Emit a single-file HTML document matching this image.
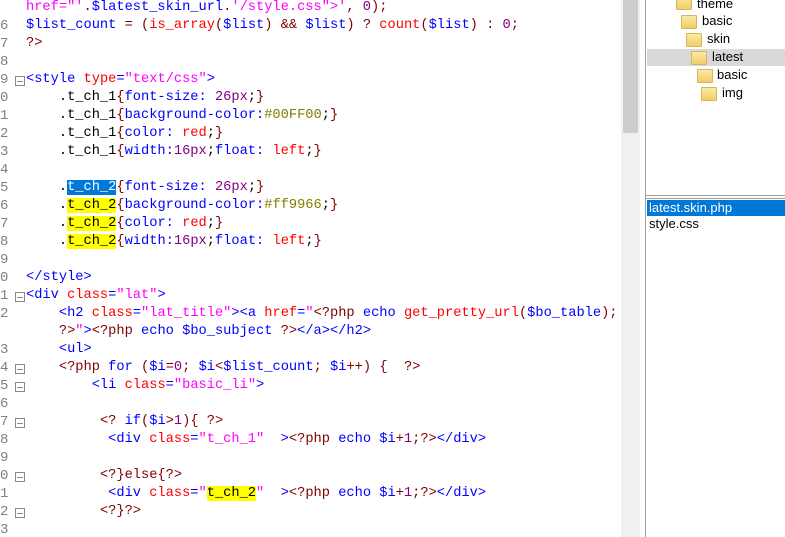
<!DOCTYPE html>
<html><head><meta charset="utf-8"><style>
html,body{margin:0;padding:0;width:785px;height:537px;overflow:hidden;background:#fff;position:relative}
#w{position:absolute;left:0;top:4px;width:620px;height:537px}
.ln{position:absolute;left:0;font:14px "Liberation Mono",monospace;color:#808080;line-height:18px}
.c{position:absolute;left:26px;font:13.7px "Liberation Mono",monospace;white-space:pre;line-height:18px;color:#000}
.f{position:absolute;left:15px;width:8px;height:8px;border:1px solid #888;}
.f:after{content:"";position:absolute;left:1px;right:1px;top:3.5px;height:1px;background:#888}
.t{color:#0000ff}.a{color:#ff0000}.s{color:#ff00ff}.o{color:#800000}.n{color:#800080}.h{color:#808000}
.y{background:#ffff00}.sel{background:#0078d7;color:#fff}
.tr{position:absolute;font:13px "Liberation Sans",sans-serif;color:#000;line-height:18px}
.fo{position:absolute;width:14px;height:12px;background:linear-gradient(#fbe9a6,#f2cd62);border:1px solid #d9b45a;border-radius:1px}
</style></head><body>
<div style="position:absolute;left:621px;top:0;width:19px;height:537px;background:#f0f0f0"></div>
<div style="position:absolute;left:623px;top:0;width:15px;height:133px;background:#cdcdcd"></div>
<div style="position:absolute;left:645px;top:0;width:1px;height:537px;background:#a0a0a0"></div>
<div style="position:absolute;left:645px;top:195px;width:140px;height:1px;background:#a0a0a0"></div>
<div style="position:absolute;left:645px;top:198px;width:140px;height:1px;background:#a0a0a0"></div>
<div style="position:absolute;left:647px;top:49px;width:138px;height:17px;background:#d9d9d9"></div>
<div class="fo" style="left:676px;top:-4px"></div><div class="tr" style="left:697px;top:-5px">theme</div>
<div class="fo" style="left:681px;top:15px"></div><div class="tr" style="left:702px;top:12px">basic</div>
<div class="fo" style="left:686px;top:33px"></div><div class="tr" style="left:707px;top:30px">skin</div>
<div class="fo" style="left:691px;top:51px"></div><div class="tr" style="left:712px;top:48px">latest</div>
<div class="fo" style="left:697px;top:69px"></div><div class="tr" style="left:717px;top:66px">basic</div>
<div class="fo" style="left:701px;top:87px"></div><div class="tr" style="left:722px;top:84px">img</div>
<div style="position:absolute;left:647px;top:200px;width:138px;height:16px;background:#0078d7"></div>
<div class="tr" style="left:649px;top:199px;color:#fff">latest.skin.php</div>
<div class="tr" style="left:649px;top:215px">style.css</div>

<div id="w">
<div class="c" style="top:-5px"><span class="s">href="'</span><span class="o">.</span><span class="t">$latest_skin_url</span><span class="o">.</span><span class="s">'/style.css"&gt;'</span><span class="o">,</span> <span class="n">0</span><span class="o">);</span></div>
<div class="ln" style="top:13px">6</div><div class="c" style="top:13px"><span class="t">$list_count</span> <span class="o">=</span> <span class="o">(</span><span class="a">is_array</span><span class="o">(</span><span class="t">$list</span><span class="o">)</span> <span class="o">&amp;&amp;</span> <span class="t">$list</span><span class="o">)</span> <span class="o">?</span> <span class="a">count</span><span class="o">(</span><span class="t">$list</span><span class="o">)</span> <span class="o">:</span> <span class="n">0</span><span class="o">;</span></div>
<div class="ln" style="top:31px">7</div><div class="c" style="top:31px"><span class="o">?&gt;</span></div>
<div class="ln" style="top:49px">8</div>
<div class="ln" style="top:67px">9</div><div class="f" style="top:72px"></div><div class="c" style="top:67px"><span class="t">&lt;style</span> <span class="a">type</span><span class="t">=</span><span class="s">"text/css"</span><span class="t">&gt;</span></div>
<div class="ln" style="top:85px">0</div><div class="c" style="top:85px">    .t_ch_1<span class="o">{</span><span class="t">font-size:</span> <span class="n">26px</span>;<span class="o">}</span></div>
<div class="ln" style="top:103px">1</div><div class="c" style="top:103px">    .t_ch_1<span class="o">{</span><span class="t">background-color:</span><span class="h">#00FF00</span>;<span class="o">}</span></div>
<div class="ln" style="top:121px">2</div><div class="c" style="top:121px">    .t_ch_1<span class="o">{</span><span class="t">color:</span> <span class="a">red</span>;<span class="o">}</span></div>
<div class="ln" style="top:139px">3</div><div class="c" style="top:139px">    .t_ch_1<span class="o">{</span><span class="t">width:</span><span class="n">16px</span>;<span class="t">float:</span> <span class="a">left</span>;<span class="o">}</span></div>
<div class="ln" style="top:157px">4</div>
<div class="ln" style="top:175px">5</div><div class="c" style="top:175px">    .<span class="sel">t_ch_2</span><span class="o">{</span><span class="t">font-size:</span> <span class="n">26px</span>;<span class="o">}</span></div>
<div class="ln" style="top:193px">6</div><div class="c" style="top:193px">    .<span class="y">t_ch_2</span><span class="o">{</span><span class="t">background-color:</span><span class="h">#ff9966</span>;<span class="o">}</span></div>
<div class="ln" style="top:211px">7</div><div class="c" style="top:211px">    .<span class="y">t_ch_2</span><span class="o">{</span><span class="t">color:</span> <span class="a">red</span>;<span class="o">}</span></div>
<div class="ln" style="top:229px">8</div><div class="c" style="top:229px">    .<span class="y">t_ch_2</span><span class="o">{</span><span class="t">width:</span><span class="n">16px</span>;<span class="t">float:</span> <span class="a">left</span>;<span class="o">}</span></div>
<div class="ln" style="top:247px">9</div>
<div class="ln" style="top:265px">0</div><div class="c" style="top:265px"><span class="t">&lt;/style&gt;</span></div>
<div class="ln" style="top:283px">1</div><div class="f" style="top:288px"></div><div class="c" style="top:283px"><span class="t">&lt;div</span> <span class="a">class</span><span class="t">=</span><span class="s">"lat"</span><span class="t">&gt;</span></div>
<div class="ln" style="top:301px">2</div><div class="c" style="top:301px">    <span class="t">&lt;h2</span> <span class="a">class</span><span class="t">=</span><span class="s">"lat_title"</span><span class="t">&gt;&lt;a</span> <span class="a">href</span><span class="t">=</span><span class="s">"</span><span class="o">&lt;?php</span> <span class="t">echo</span> <span class="a">get_pretty_url</span><span class="o">(</span><span class="t">$bo_table</span><span class="o">);</span></div>
<div class="c" style="top:319px">    <span class="o">?&gt;</span><span class="s">"</span><span class="t">&gt;</span><span class="o">&lt;?php</span> <span class="t">echo $bo_subject</span> <span class="o">?&gt;</span><span class="t">&lt;/a&gt;&lt;/h2&gt;</span></div>
<div class="ln" style="top:337px">3</div><div class="c" style="top:337px">    <span class="t">&lt;ul&gt;</span></div>
<div class="ln" style="top:355px">4</div><div class="f" style="top:360px"></div><div class="c" style="top:355px">    <span class="o">&lt;?php</span> <span class="t">for</span> <span class="o">(</span><span class="t">$i</span><span class="o">=</span><span class="n">0</span><span class="o">;</span> <span class="t">$i</span><span class="o">&lt;</span><span class="t">$list_count</span><span class="o">;</span> <span class="t">$i</span><span class="o">++)</span> <span class="o">{</span>  <span class="o">?&gt;</span></div>
<div class="ln" style="top:373px">5</div><div class="f" style="top:378px"></div><div class="c" style="top:373px">        <span class="t">&lt;li</span> <span class="a">class</span><span class="t">=</span><span class="s">"basic_li"</span><span class="t">&gt;</span></div>
<div class="ln" style="top:391px">6</div>
<div class="ln" style="top:409px">7</div><div class="f" style="top:414px"></div><div class="c" style="top:409px">         <span class="o">&lt;?</span> <span class="t">if</span><span class="o">(</span><span class="t">$i</span><span class="o">&gt;</span><span class="n">1</span><span class="o">){</span> <span class="o">?&gt;</span></div>
<div class="ln" style="top:427px">8</div><div class="c" style="top:427px">          <span class="t">&lt;div</span> <span class="a">class</span><span class="t">=</span><span class="s">"t_ch_1"</span>  <span class="t">&gt;</span><span class="o">&lt;?php</span> <span class="t">echo $i</span><span class="o">+</span><span class="n">1</span><span class="o">;?&gt;</span><span class="t">&lt;/div&gt;</span></div>
<div class="ln" style="top:445px">9</div>
<div class="ln" style="top:463px">0</div><div class="f" style="top:468px"></div><div class="c" style="top:463px">         <span class="o">&lt;?}else{?&gt;</span></div>
<div class="ln" style="top:481px">1</div><div class="c" style="top:481px">          <span class="t">&lt;div</span> <span class="a">class</span><span class="t">=</span><span class="s">"</span><span class="y">t_ch_2</span><span class="s">"</span>  <span class="t">&gt;</span><span class="o">&lt;?php</span> <span class="t">echo $i</span><span class="o">+</span><span class="n">1</span><span class="o">;?&gt;</span><span class="t">&lt;/div&gt;</span></div>
<div class="ln" style="top:499px">2</div><div class="f" style="top:504px"></div><div class="c" style="top:499px">         <span class="o">&lt;?}?&gt;</span></div>
<div class="ln" style="top:517px">3</div>
</div>
</body></html>
